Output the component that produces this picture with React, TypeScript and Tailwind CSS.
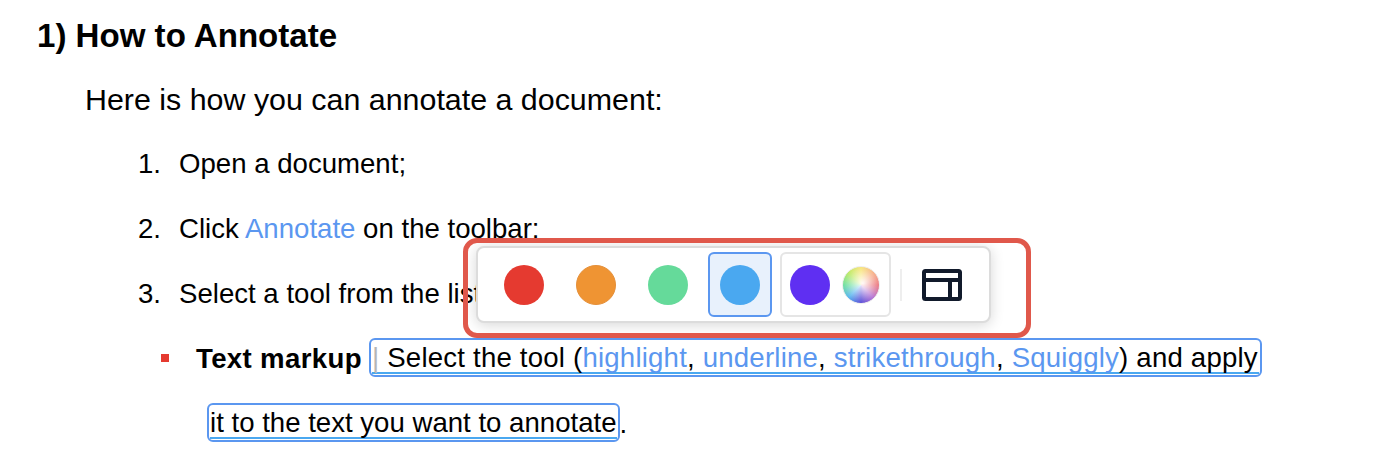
const link = "text-[#5b97f0]";

function Swatch({ color }: { color: string }) {
  return <span className={`block w-10 h-10 rounded-full ${color}`} />;
}

function AnnotationToolbar() {
  return (
    <div className="absolute left-[463px] top-[238px] w-[568px] h-[100px] border-[5px] border-[#e0584b] rounded-[14px] pl-2 pt-[3px] overflow-hidden">
      <div className="flex items-center w-[515px] h-[77px] bg-white rounded-lg border-2 border-[#dcdcdc] shadow-[0_2px_14px_rgba(0,0,0,0.16)] pl-[26px]">
        <div className="flex items-center gap-8">
          <Swatch color="bg-[#e53a30]" />
          <Swatch color="bg-[#ef9433] border border-[#e5903a]" />
          <Swatch color="bg-[#65da9a]" />
        </div>
        <div className="flex items-center justify-center w-16 h-[65px] ml-5 rounded-md border-2 border-[#5b97f0] bg-[#e8f1fc]">
          <Swatch color="bg-[#4aa8f0]" />
        </div>
        <div className="flex items-center w-[111px] h-[65px] ml-2 pl-2 gap-3 rounded-md border-2 border-[#e5e5e5]">
          <Swatch color="bg-[#5f2ff2]" />
          <span className="block w-[38px] h-[38px] rounded-full border border-[#eeeeee] bg-[radial-gradient(circle_at_55%_45%,rgba(255,255,255,0.95),rgba(255,255,255,0)_70%),conic-gradient(from_0deg,#f6e05e,#f59e6b,#e8606a,#b06ad0,#5b4fd8,#5fb8f0,#6fe0a0,#b8e85a,#f6e05e)]" />
        </div>
        <span className="block w-0.5 h-8 ml-[9px] bg-[#eeeeee]" />
        <svg className="ml-5" width="40" height="32" viewBox="0 0 40 32" fill="none" stroke="#111a2b" strokeWidth="4" strokeLinejoin="round">
          <rect x="2" y="2" width="36" height="28" rx="1.5" />
          <path d="M2 11h36M28 11v19" />
        </svg>
      </div>
    </div>
  );
}

export default function App() {
  return (
    <div className="relative w-[1396px] h-[458px] bg-white overflow-hidden text-black font-['Liberation_Sans',Arial,sans-serif]">
      <h1 className="pl-[37px] pt-4 text-[33.1px] leading-10 font-bold">1) How to Annotate</h1>

      <p className="pl-[85px] mt-[23px] text-[30.4px] leading-10">Here is how you can annotate a document:</p>

      <ol className="pl-[138px] text-[27.6px] leading-10">
        <li className="mt-[25px] flex gap-[18px]"><span>1.</span><span>Open a document;</span></li>
        <li className="mt-[25px] flex gap-[18px]">
          <span>2.</span>
          <span>Click <span className={link}>Annotate</span> on the toolbar:</span>
        </li>
        <li className="mt-[25px] flex gap-[18px]"><span>3.</span><span>Select a tool from the list</span></li>
      </ol>

      <div className="flex items-center pl-[161px] mt-[23px] h-10 text-[27.6px]">
        <span className="block w-[8px] h-[8px] mt-0.5 bg-[#e53a30]" />
        <span className="ml-[27px] pt-1 font-bold tracking-[0.35px]">Text markup</span>
        <span className="ml-[7px] block self-end w-[893px] h-[39px] rounded-md border-2 border-[#5b97f0] whitespace-nowrap">
          <span className="flex items-center h-[34px] pt-1 mx-px border-b-2 border-[#4aa8f0] tracking-[0.2px]">
            <span className="text-[#b5b5b5]">|</span>
            <span className="ml-2">Select the tool (<span className={link}>highlight</span>, <span className={link}>underline</span>, <span className={link}>strikethrough</span>, <span className={link}>Squiggly</span>) and apply</span>
          </span>
        </span>
      </div>

      <div className="flex items-center pl-[207px] mt-[25px] h-10 text-[27.6px]">
        <span className="block self-end h-[39px] rounded-md border-2 border-[#5b97f0] whitespace-nowrap">
          <span className="flex items-center h-[34px] pt-1 mx-px border-b-2 border-[#4aa8f0]">it to the text you want to annotate</span>
        </span>
        <span className="pt-1">.</span>
      </div>

      <AnnotationToolbar />
    </div>
  );
}
